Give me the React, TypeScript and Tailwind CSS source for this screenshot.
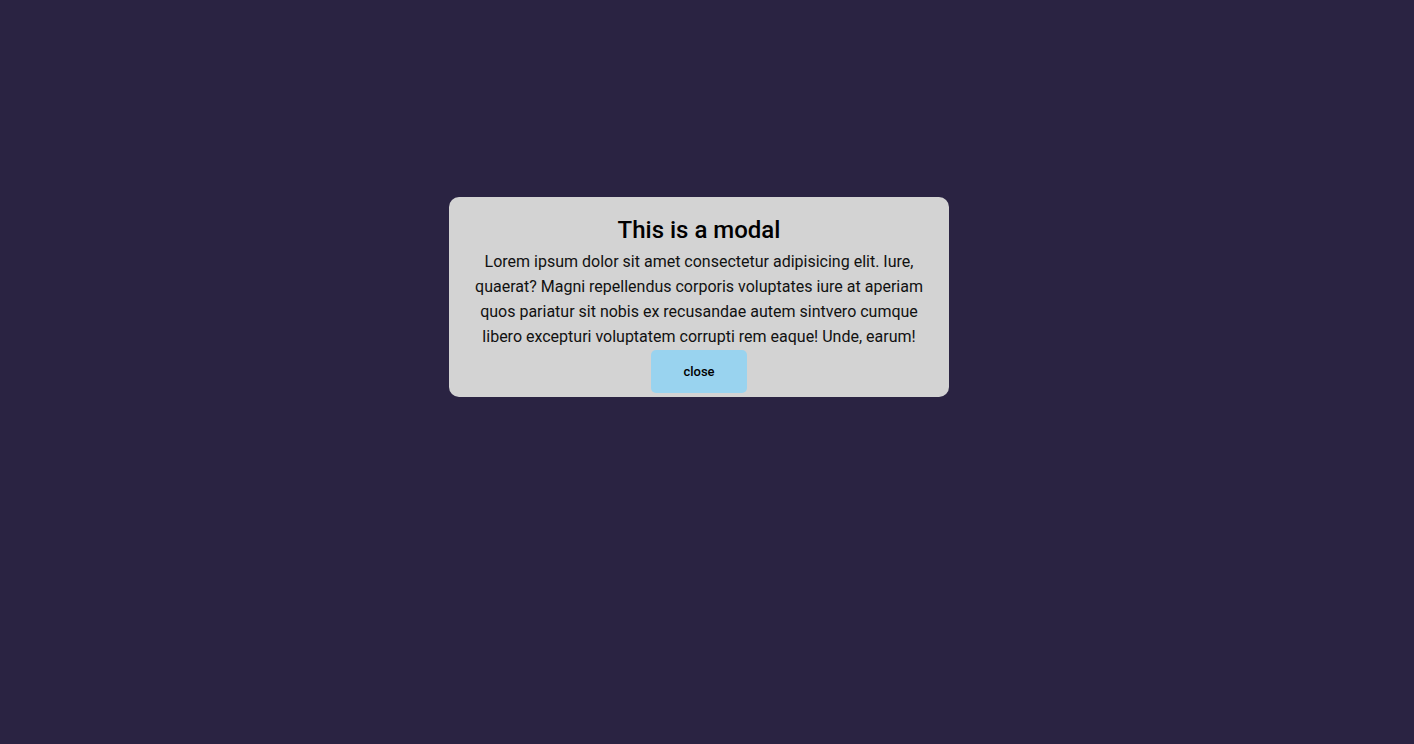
export default function App() {
  return (
    <div className="min-h-screen w-full bg-[#2a2342] font-['Roboto',sans-serif]">
      <div className="flex h-[744px] items-start justify-center pr-4 pt-[197px]">
        <div className="flex h-[200px] w-[500px] flex-col items-center rounded-[10px] bg-[#d3d3d3] px-5 pt-[18px] text-center text-black">
          <h2 className="text-[24px] font-medium leading-[30px]">This is a modal</h2>
          <p className="mt-[4px] text-[16px] leading-[25px] text-[#111]">
            Lorem ipsum dolor sit amet consectetur adipisicing elit. Iure, quaerat? Magni repellendus corporis
            voluptates iure at aperiam quos pariatur sit nobis ex recusandae autem sintvero cumque libero excepturi
            voluptatem corrupti rem eaque! Unde, earum!
          </p>
          <button className="mt-[1px] h-[43px] w-[96px] rounded-[5px] bg-[#99d3ef] text-[13px] font-medium text-black">
            close
          </button>
        </div>
      </div>
    </div>
  );
}
